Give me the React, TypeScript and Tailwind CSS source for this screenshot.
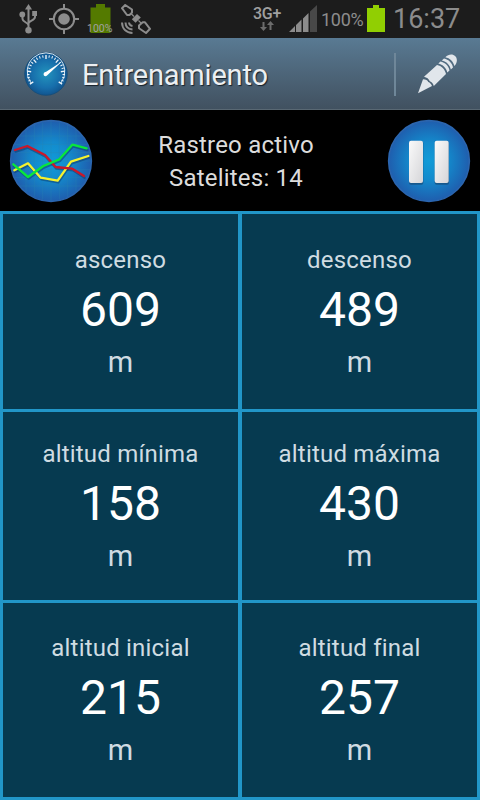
import type { ReactNode } from 'react';

interface Stat {
  label: string;
  value: string;
}

interface StatRow {
  className: string;
  stats: Stat[];
}

const rows: StatRow[] = [
  {
    className: 'h-[195px] pt-[28px]',
    stats: [
      { label: 'ascenso', value: '609' },
      { label: 'descenso', value: '489' },
    ],
  },
  {
    className: 'h-[188px] pt-[24px]',
    stats: [
      { label: 'altitud mínima', value: '158' },
      { label: 'altitud máxima', value: '430' },
    ],
  },
  {
    className: 'h-[194px] pt-[27px]',
    stats: [
      { label: 'altitud inicial', value: '215' },
      { label: 'altitud final', value: '257' },
    ],
  },
];

function UsbIcon() {
  return (
    <svg viewBox="0 0 18 30" className="ml-[19px] h-[30px] w-[18px] shrink-0" fill="none" stroke="#8c8c8c" strokeWidth="2">
      <path d="M9.5 5v21M3.5 11v4c0 3 6 3.5 6 6.5M16 10v3c0 3.5-6.5 3.5-6.5 6.5" />
      <path d="M9.5 0l3.5 5.5H6z" fill="#8c8c8c" stroke="none" />
      <circle cx="3.3" cy="10.5" r="2.9" fill="#8c8c8c" stroke="none" />
      <path d="M13.2 7H18v5h-4.8z" fill="#8c8c8c" stroke="none" />
      <circle cx="9.5" cy="26.3" r="3.2" fill="#8c8c8c" stroke="none" />
    </svg>
  );
}

function GpsIcon() {
  return (
    <svg viewBox="0 0 30 30" className="ml-[12px] h-[30px] w-[30px] shrink-0" fill="none" stroke="#8c8c8c">
      <circle cx="15" cy="15" r="10.2" strokeWidth="2" />
      <circle cx="15" cy="15" r="5.8" fill="#8c8c8c" stroke="none" />
      <path d="M15 0v5M15 25v5M0 15h5M25 15h5" strokeWidth="2" />
    </svg>
  );
}

function SatelliteIcon() {
  return (
    <svg viewBox="0 0 30 30" className="ml-[10px] h-[30px] w-[30px] shrink-0" fill="none" stroke="#8c8c8c" strokeWidth="2">
      <path d="M1 4.2L4.2 1l6.8 4.5v3L8.5 11H6z" strokeLinejoin="round" />
      <path d="M18 21.5l3.7-3.2H24l5 6.5-4 4.2-7-4.8z" strokeLinejoin="round" />
      <path d="M10.8 15.2l5.2-5.2 3.8 3.6-5.2 5.2z" fill="#8c8c8c" stroke="none" />
      <path d="M10 9.500l3 3M17.500 16.500l3 3" strokeWidth="1.2" />
      <path d="M8 18.500c.2 2.200 1.300 3.200 3.500 3.500M4.500 18.500c.2 4.300 2.600 6.700 7 7M1 18.500c.2 6.200 4.300 10.200 10.500 10.500" />
    </svg>
  );
}

function SignalIcon() {
  return (
    <svg viewBox="0 0 28 27" className="ml-[7px] h-[27px] w-[28px] shrink-0">
      <path d="M0 27l6-6v6zM7 20l5.500-5.500V27H7zM14 13.500L19.500 8v19H14z" fill="#8c8c8c" />
      <path d="M21 6.500L28 0v27h-7z" fill="#484848" />
    </svg>
  );
}

function StatusBar() {
  return (
    <div className="flex h-[38px] items-start bg-[#1c1c1c] pt-[4px] text-[#8c8c8c]">
      <UsbIcon />
      <GpsIcon />
      <div className="relative ml-[11px] h-[29px] w-[21px] shrink-0">
        <svg viewBox="0 0 21 29" className="h-[29px] w-[21px]">
          <path d="M6 0h9v3.500h5.500V29H.5V3.500H6z" fill="#547a00" />
        </svg>
        <span className="absolute -left-[3px] top-[19px] text-[10.5px] leading-[12px] text-[#a2a2a2]">100%</span>
      </div>
      <SatelliteIcon />

      <div className="ml-[101px] flex w-[30px] shrink-0 flex-col items-center pt-[2px]">
        <span className="text-[16px] font-medium leading-[15px] tracking-[-0.3px] text-[#a0a0a0]">3G+</span>
        <svg viewBox="0 0 14 10" className="h-[10px] w-[14px]" fill="#6c6c6c">
          <path d="M2.500 1h2v5H7L3.500 10 0 6h2.500zM9.500 9h2V4H14l-3.500-4L7 4h2.500z" />
        </svg>
      </div>
      <div className="flex pt-px">
        <SignalIcon />
        <span className="ml-[4px] w-[43px] pt-[4px] text-[18px] leading-[22px] tracking-[-0.3px]">100%</span>
        <svg viewBox="0 0 18 27" className="ml-[3px] h-[27px] w-[18px] shrink-0">
          <path d="M6 0h6v3h6v24H0V3h6z" fill="#91cf02" />
        </svg>
        <span className="ml-[8px] text-[27px] leading-[29px]">16:37</span>
      </div>
    </div>
  );
}

function GaugeIcon() {
  const ticks = Array.from({ length: 25 }, (_, i) => -122 + i * 10.17);

  return (
    <svg viewBox="0 0 44 44" className="h-[44px] w-[44px] shrink-0">
      <defs>
        <radialGradient id="gauge">
          <stop offset="0" stopColor="#2394bd" />
          <stop offset="0.65" stopColor="#176fac" />
          <stop offset="1" stopColor="#11558f" />
        </radialGradient>
      </defs>
      <circle cx="22" cy="22" r="21.3" fill="url(#gauge)" stroke="#164c77" strokeWidth="0.8" />
      <path d="M7 31A18.800 18.800 0 1 1 37 31" fill="none" stroke="#d3e4ef" strokeWidth="1" />
      {ticks.map((angle, i) => (
        <path
          key={angle}
          d={i % 4 === 0 ? 'M22 3v4' : 'M22 3v2.500'}
          transform={`rotate(${angle} 22 22)`}
          stroke="#edf4fa"
          strokeWidth={i % 4 === 0 ? 1.4 : 1}
        />
      ))}
      <path d="M38 9.500L23 23.500c-1.500 1.500-4 .2-3.300-2 .4-1.200 1.500-1.500 2.500-1.700z" fill="#fff" />
    </svg>
  );
}

function PencilIcon() {
  return (
    <svg viewBox="0 0 40 40" className="ml-[22px] h-[40px] w-[40px] shrink-0" fill="#e1e6eb">
      <path d="M0 39.300L5 25.200c3 .2 4.500 1 5.300 2.700 1.700.5 2.800 1.800 3.700 4.100z" />
      <path d="M6 22.800L19 11c4.500.8 8 4.200 9 9L15.800 32c-.8-2.600-1.900-4-4-4.700-1-2.400-2.900-3.800-5.800-4.500z" />
      <path d="M20.300 9.600l2.200-2c4.500.9 8.200 4.400 9 9l-2.200 2c-1-4.600-4.500-8-9-9z" />
      <path d="M23.800 6.400l2.200-2c4.700 1 8.200 4.500 9 9l-2.200 2c-.9-4.500-4.300-8-9-9z" />
      <path d="M27.300 3.200C30.500 0 34.800-.3 37.300 2.300c2.400 2.500 2 6.500-.9 9.800-1-4.700-4.500-8-9.100-8.900z" />
    </svg>
  );
}

function Header() {
  return (
    <header className="flex h-[72px] items-center border-b border-[#596873] bg-linear-to-b from-[#597a93] to-[#415160] pl-[24px] pt-px">
      <GaugeIcon />
      <h1 className="ml-[14px] w-[312px] whitespace-nowrap pt-px text-[29px] leading-[36px] tracking-[-0.2px] text-[#eceff2] [text-shadow:1px_1px_1px_#17212b]">
        Entrenamiento
      </h1>
      <div className="h-[43px] w-[2px] bg-[#6f8799]" />
      <PencilIcon />
    </header>
  );
}

function RoundIcon({ id, children }: { id: string; children: ReactNode }) {
  return (
    <svg viewBox="27 24 252 252" className="h-[84px] w-[84px] shrink-0">
      <defs>
        <radialGradient id={id}>
          <stop offset="0" stopColor="#119bd7" />
          <stop offset="0.45" stopColor="#138bcd" />
          <stop offset="1" stopColor="#1f5eae" />
        </radialGradient>
      </defs>
      <circle cx="153" cy="150" r="121" fill={`url(#${id})`} stroke="#2b65ae" strokeWidth="5" />
      {children}
    </svg>
  );
}

function TrackingPanel() {
  return (
    <section className="flex h-[101px] items-center bg-black pl-[9px]">
      <RoundIcon id="chart">
        <path
          d="M78 57v186M103 42v216M128 35v230M153 30v240M178 35v230M203 42v216M228 57v186M60 75h186M43 100h220M35 125h236M32 150h242M35 175h236M43 200h220M60 225h186"
          stroke="#2a86ae"
          strokeOpacity="0.3"
          strokeWidth="3"
        />
        <g fill="none" strokeLinejoin="round" strokeLinecap="round" strokeWidth="7">
          <g stroke="#0b3a69" strokeOpacity="0.5" transform="translate(2 5)">
            <path d="M43 178l41-21 38 43 51 9 40-57 52-17" />
            <path d="M45 117l37-12 53 27 32 36 50 5 35 22" />
            <path d="M40 160l44 38 46-33 48-20 39-44 43 11" />
          </g>
          <path d="M43 178l41-21 38 43 51 9 40-57 52-17" stroke="#f5f12e" />
          <path d="M45 117l37-12 53 27 32 36 50 5 35 22" stroke="#c9182b" />
          <path d="M40 160l44 38 46-33 48-20 39-44 43 11" stroke="#08e63c" />
        </g>
      </RoundIcon>

      <div className="w-[294px] pr-[8px] pt-[2px] text-center text-[24px] leading-[33px] tracking-[0.2px] text-[#dcdcdc]">
        <p>Rastreo activo</p>
        <p>Satelites: 14</p>
      </div>

      <RoundIcon id="pause">
        <defs>
          <linearGradient id="bar" x1="0" y1="0" x2="1" y2="1">
            <stop offset="0" stopColor="#fafafa" />
            <stop offset="1" stopColor="#d5d5d8" />
          </linearGradient>
        </defs>
        <g fill="#174b78" fillOpacity="0.7">
          <rect x="93" y="91" width="43" height="130" rx="6" />
          <rect x="170" y="91" width="43" height="130" rx="6" />
        </g>
        <rect x="93" y="89" width="42" height="127" rx="6" fill="url(#bar)" />
        <rect x="170" y="89" width="42" height="127" rx="6" fill="url(#bar)" />
      </RoundIcon>
    </section>
  );
}

function StatCell({ label, value }: Stat) {
  return (
    <div className="flex flex-col items-center whitespace-nowrap">
      <span className="text-[24px] leading-[36px] tracking-[0.2px] text-[#cfdce2]">{label}</span>
      <span className="pt-px text-[48px] leading-[62px] text-white">{value}</span>
      <span className="text-[29px] leading-[42px] text-[#cfdbe2]">m</span>
    </div>
  );
}

export default function App() {
  return (
    <div className="flex h-[800px] w-[480px] flex-col overflow-hidden bg-black font-[Roboto,sans-serif]">
      <StatusBar />
      <Header />
      <TrackingPanel />
      <main className="flex h-[589px] flex-col gap-[3px] bg-[#2196c8] p-[3px]">
        {rows.map((row) => (
          <div key={row.stats[0].label} className="grid grid-cols-2 gap-x-[4px]">
            {row.stats.map((stat) => (
              <div key={stat.label} className={`bg-[#063a50] ${row.className}`}>
                <StatCell {...stat} />
              </div>
            ))}
          </div>
        ))}
      </main>
    </div>
  );
}
